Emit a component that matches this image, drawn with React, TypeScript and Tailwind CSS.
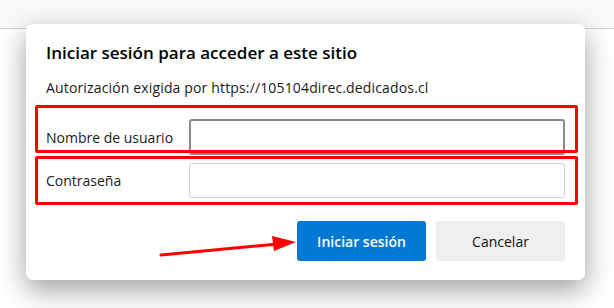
const App = () => {
	return (
		<div
			className="relative w-[614px] h-[308px] overflow-hidden bg-white"
			style={{ fontFamily: '"Open Sans", "Noto Sans", sans-serif' }}
		>
			{/* Browser page behind the modal */}
			<div className="h-[29px] bg-[#f9f9f9] border-b border-[#cfcfcf]" />

			{/* Auth dialog */}
			<div className="absolute left-[26px] top-[24px] w-[559px] rounded-[7px] bg-white shadow-[0_10px_28px_rgba(0,0,0,0.38)] px-5 pt-[17px] pb-[19px]">
				<h1 className="text-[17px] leading-6 font-semibold text-black">
					Iniciar sesión para acceder a este sitio
				</h1>
				<p className="mt-[13px] text-[14px] leading-5 text-[#1a1a1a] tracking-[0.15px]">
					Autorización exigida por https://105104direc.dedicados.cl
				</p>

				{/* Fields */}
				<div className="mt-[21px] flex flex-col gap-2">
					<div className="flex items-center">
						<label className="w-[143px] text-[14px] text-[#1a1a1a]">
							Nombre de usuario
						</label>
						<input
							type="text"
							className="w-[376px] h-[36px] rounded-[3px] border-2 border-[#8a8a8a] bg-white outline-none"
						/>
					</div>
					<div className="flex items-center">
						<label className="w-[143px] text-[14px] text-[#1a1a1a]">
							Contraseña
						</label>
						<input
							type="password"
							className="w-[376px] h-[35px] rounded-[3px] border border-[#d2d2d2] bg-white outline-none"
						/>
					</div>
				</div>

				{/* Actions */}
				<div className="mt-[23px] flex justify-end gap-[10px]">
					<button className="w-[129px] h-10 rounded-[3px] bg-[#0078d4] text-white text-[14px] font-semibold">
						Iniciar sesión
					</button>
					<button className="w-[129px] h-10 rounded-[3px] bg-[#efefef] text-[#111] text-[14px]">
						Cancelar
					</button>
				</div>

				{/* Red annotation boxes */}
				<div className="absolute left-[9px] top-[81px] w-[543px] h-[48px] border-[3px] border-[#ff0000] rounded-[2px]" />
				<div className="absolute left-[9px] top-[132px] w-[543px] h-[49px] border-[3px] border-[#ff0000] rounded-[2px]" />
			</div>

			{/* Red annotation arrow */}
			<svg className="absolute left-0 top-0" width="614" height="308">
				<line x1="161" y1="255" x2="278" y2="244" stroke="#ff0000" strokeWidth="3" strokeLinecap="round" />
				<polygon points="272,236 296,242 274,251" fill="#ff0000" />
			</svg>
		</div>
	);
};

export default App;
